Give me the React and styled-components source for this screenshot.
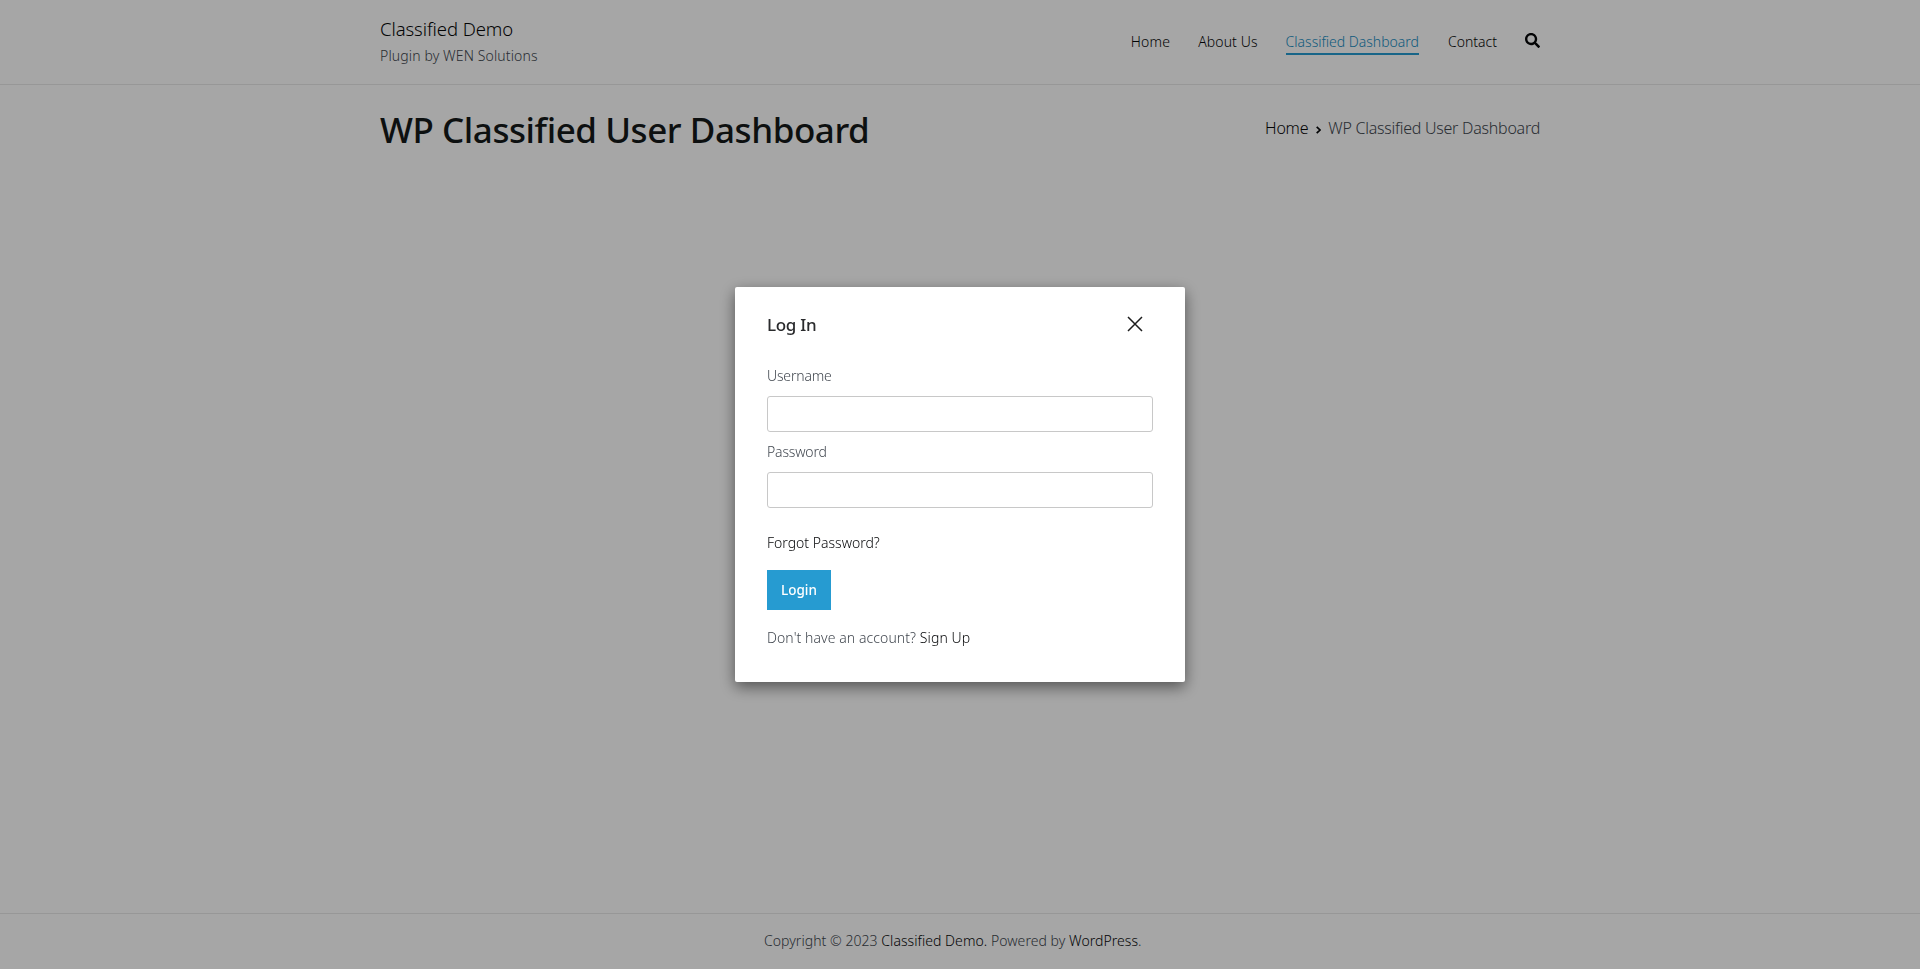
import React from 'react';
import styled, { createGlobalStyle, css } from 'styled-components';

const colors = {
  ink: '#060709',
  text: '#41474f',
  accent: '#269bd1',
  line: '#e9e9e9',
};

const GlobalStyle = createGlobalStyle`
  *, *::before, *::after { box-sizing: border-box; }
  body {
    margin: 0;
    overflow: hidden;
    background: #fff;
    color: ${colors.text};
    font: 300 14px/24px "Segoe UI", "Noto Sans", "Open Sans", sans-serif;
  }
  a { color: ${colors.ink}; text-decoration: none; }
  h1, h2, p { margin: 0; }
`;

const Page = styled.div`
  display: flex;
  flex-direction: column;
  height: 969px;
`;

const Header = styled.header`
  flex: none;
  height: 85px;
  border-bottom: 1px solid ${colors.line};
`;

const Container = styled.div`
  display: flex;
  justify-content: space-between;
  width: 1160px;
  margin: 0 auto;
`;

const Branding = styled.div`
  padding-top: 15px;
`;

const SiteTitle = styled.p`
  font-size: 18.5px;
  line-height: 27px;
  letter-spacing: -0.08px;
`;

const Tagline = styled.p`
  line-height: 28px;
  letter-spacing: 0.13px;
`;

const Nav = styled.nav`
  display: flex;
  align-items: flex-start;
  padding-top: 30px;
`;

const NavLink = styled.a`
  height: 25px;
  margin-right: 28px;
  letter-spacing: ${({ $spacing }) => $spacing || 0}px;
  ${({ $active }) => $active && css`
    margin-right: 29px;
    color: #168cc2;
    border-bottom: 2px solid ${colors.accent};
  `}
`;

const SearchIcon = styled.svg`
  width: 15px;
  height: 15px;
  margin-top: 3px;
  fill: ${colors.ink};
`;

const Main = styled.main`
  flex: 1;
`;

const PageTitle = styled.h1`
  padding-top: 21px;
  color: #15191a;
  font-size: 35px;
  font-weight: 500;
  line-height: 48px;
  letter-spacing: -0.44px;
`;

const Breadcrumb = styled.div`
  display: flex;
  align-items: center;
  height: 26px;
  margin-top: 30px;
  font-size: 16px;
  letter-spacing: -0.25px;
`;

const Chevron = styled.svg`
  width: 5px;
  height: 8px;
  margin: 3px 7px 0 8px;
  fill: none;
  stroke: ${colors.ink};
  stroke-width: 1.7;
`;

const Footer = styled.footer`
  flex: none;
  height: 56px;
  padding: 15px 0 0 764px;
  border-top: 1px solid ${colors.line};
  white-space: nowrap;
  letter-spacing: 0.05px;
`;

const Overlay = styled.div`
  position: fixed;
  inset: 0;
  display: flex;
  justify-content: center;
  align-items: center;
  background: rgba(0, 0, 0, 0.35);
`;

const Modal = styled.section`
  width: 450px;
  height: 395px;
  padding: 24px 32px;
  background: #fff;
  border-radius: 2px;
  box-shadow: 0 5px 15px rgba(0, 0, 0, 0.5);
`;

const ModalHeader = styled.div`
  display: flex;
  justify-content: space-between;
  height: 53px;
`;

const ModalTitle = styled.h2`
  color: #2a2b2d;
  font-size: 17px;
  font-weight: 500;
  line-height: 28px;
  letter-spacing: -0.3px;
`;

const CloseButton = styled.button`
  width: 16px;
  height: 16px;
  margin: 5px 10px 0 0;
  padding: 0;
  border: 0;
  background: none;

  svg {
    display: block;
    stroke: #1d1d1d;
    stroke-width: 1.5;
  }
`;

const Field = styled.label`
  display: block;
  height: 76px;
  letter-spacing: -0.17px;
`;

const Input = styled.input`
  display: block;
  width: 100%;
  height: 36px;
  margin-top: 8px;
  padding: 0 10px;
  border: 1px solid #c8c8c8;
  border-radius: 3px;
  outline: none;
`;

const ForgotLink = styled.a`
  display: block;
  margin-top: 15px;
`;

const LoginButton = styled.button`
  display: block;
  width: 64px;
  height: 40px;
  margin: 15px 0 16px;
  padding: 0;
  border: 0;
  background: ${colors.accent};
  color: #fff;
  font: inherit;
  font-size: 13.5px;
  font-weight: 500;
`;

const SignUpText = styled.p`
  letter-spacing: 0.08px;
`;

export default function App() {
  return (
    <>
      <GlobalStyle />
      <Page>
        <Header>
          <Container>
            <Branding>
              <SiteTitle><a href="#">Classified Demo</a></SiteTitle>
              <Tagline>Plugin by WEN Solutions</Tagline>
            </Branding>
            <Nav>
              <NavLink href="#" $spacing={0.2}>Home</NavLink>
              <NavLink href="#" $spacing={0.1}>About Us</NavLink>
              <NavLink href="#" $active>Classified Dashboard</NavLink>
              <NavLink href="#">Contact</NavLink>
              <SearchIcon viewBox="0 0 512 512">
                <path d="M505 442.700 405.300 343c-4.500-4.500-10.600-7-17-7H372c27.600-35.300 44-79.700 44-128C416 93.100 322.900 0 208 0S0 93.100 0 208s93.100 208 208 208c48.300 0 92.700-16.400 128-44v16.300c0 6.400 2.500 12.500 7 17l99.700 99.700c9.400 9.400 24.600 9.400 33.900 0l28.300-28.300c9.400-9.400 9.400-24.600.1-34zM208 336c-70.700 0-128-57.200-128-128 0-70.700 57.200-128 128-128 70.700 0 128 57.200 128 128 0 70.700-57.200 128-128 128z" />
              </SearchIcon>
            </Nav>
          </Container>
        </Header>
        <Main>
          <Container>
            <PageTitle>WP Classified User Dashboard</PageTitle>
            <Breadcrumb>
              <a href="#">Home</a>
              <Chevron viewBox="0 0 5 8"><path d="M.7 .8 4 4 .7 7.200" /></Chevron>
              <span>WP Classified User Dashboard</span>
            </Breadcrumb>
          </Container>
        </Main>
        <Footer>
          Copyright © 2023 <a href="#">Classified Demo.</a> Powered by <a href="#">WordPress</a>.
        </Footer>
      </Page>
      <Overlay>
        <Modal role="dialog">
          <ModalHeader>
            <ModalTitle>Log In</ModalTitle>
            <CloseButton aria-label="Close">
              <svg width="16" height="16" viewBox="0 0 16 16">
                <path d="M1 1 15 15M15 1 1 15" />
              </svg>
            </CloseButton>
          </ModalHeader>
          <Field>Username<Input type="text" /></Field>
          <Field>Password<Input type="password" /></Field>
          <ForgotLink href="#">Forgot Password?</ForgotLink>
          <LoginButton>Login</LoginButton>
          <SignUpText>Don't have an account? <a href="#">Sign Up</a></SignUpText>
        </Modal>
      </Overlay>
    </>
  );
}
